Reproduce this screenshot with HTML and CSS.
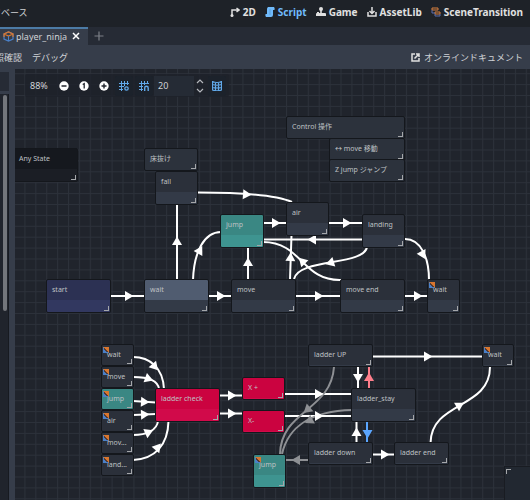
FILE: index.html
```html
<!DOCTYPE html>
<html lang="ja">

<head>
    <meta charset="UTF-8">
    <meta name="viewport" content="width=device-width, initial-scale=1.0">
    <title>player_ninja</title>
    <link rel="stylesheet" href="styles.css">
</head>

<body>

    <header class="topbar">
        <span class="menu-cut">タベース</span>
        <nav class="modes">
            <button><svg width="10" height="10" viewBox="0 0 10 10"><path d="M2 9V3H8M6.500 1L9 3L6.500 5" fill="none" stroke="#e0e0e0" stroke-width="1.500"/><circle cx="2" cy="8.500" r="1.500" fill="#e0e0e0"/></svg>2D</button>
            <button class="active"><svg width="10" height="10" viewBox="0 0 10 10"><path d="M3 0H9Q10 1 9.500 3H8V8Q8 10 6 10H1Q0 9 .5 7H2V2Q2 1 3 0Z" fill="#70bafa"/><path d="M4 3H6M4 5H6M4 7H6" stroke="#4f8fc9" stroke-width=".6"/></svg>Script</button>
            <button><svg width="10" height="10" viewBox="0 0 10 10"><circle cx="5" cy="2" r="2" fill="#e0e0e0"/><path d="M4.200 3H5.800V6H9Q10 6 10 7V9H0V7Q0 6 1 6H1V5H3V6H4.200Z" fill="#e0e0e0"/></svg>Game</button>
            <button><svg width="10" height="10" viewBox="0 0 10 10"><path d="M1 5V9H9V5M5 0V6M2.500 4L5 6.500L7.500 4" fill="none" stroke="#e0e0e0" stroke-width="1.500"/></svg>AssetLib</button>
            <button><svg width="10" height="10" viewBox="0 0 10 10"><path d="M1 1H7V3H1ZM4 5H9V7H4Z" fill="none" stroke="#d9803f"/><path d="M1 3V6H4M4 7V9H9V7" fill="none" stroke="#5a6fae"/></svg>SceneTransition</button>
        </nav>
    </header>

    <div class="tabs">
        <button class="tab"><svg width="11" height="11" viewBox="0 0 11 11"><path d="M1 3L5.500 1L10 3V8L5.500 10L1 8Z" fill="none" stroke="#4a80c8" stroke-width="1.200"/><path d="M1 6V3L5.500 1L10 3V6M1 3L5.500 5L10 3" fill="none" stroke="#d9762e" stroke-width="1.200"/><path d="M5.500 5V10" stroke="#4a80c8"/></svg>player_ninja<svg class="close" width="8" height="8" viewBox="0 0 8 8"><path d="M1 1L7 7M7 1L1 7" stroke="#fff" stroke-width="1.500"/></svg></button>
        <button class="add" aria-label="+"><svg width="10" height="10" viewBox="0 0 10 10"><path d="M5 .5V9.500M.5 5H9.500" stroke="#7c8088" stroke-width="1.200"/></svg></button>
    </div>

    <div class="menubar">
        <button class="menu-item first">照確認</button>
        <button class="menu-item">デバッグ</button>
        <a class="docs" href="#"><svg width="9" height="9" viewBox="0 0 9 9"><path d="M4 1H1V8H8V5M5 1H8V4M8 1L3.500 5.500" fill="none" stroke="#e0e0e0" stroke-width="1.500"/></svg>オンラインドキュメント</a>
    </div>

    <main class="main">
        <aside class="side">
            <div class="side-top"></div>
            <div class="side-list"><div class="scroll"></div></div>
        </aside>

        <div class="graph">
            <svg class="edges" width="100%" height="100%">
                <defs>
                    <pattern id="grid" x="9.400" y="47.800" width="10.900" height="10.900" patternUnits="userSpaceOnUse">
                        <path d="M.5 0V10.900M0 .5H10.900" stroke="#2c313a"/>
                    </pattern>
                    <path id="arrow" d="M-4 -5L4.500 0L-4 5Z"/>
                </defs>
                <rect width="100%" height="100%" fill="url(#grid)"/>
                <g transform="translate(-15 -69)">
                    <!-- transitions -->
                    <g class="line">
                        <path d="M111 296H144M209 296H232M296 296H341M405 296H428"/>
                        <path d="M177 280V204M248 280V247M290 280L291.500 235"/>
                        <path d="M263 223H287M329 223H363M363 239.500H263"/>
                        <path d="M193 280C194 252 204 232 221 232"/>
                        <path d="M198 192.500C236 192.500 276 195 292 202"/>
                        <path d="M341 280C302 281 302 242 263 242"/>
                        <path d="M367 247C364 266 299 258 294 279"/>
                        <path d="M405 239C421 239 429 258 429 280"/>
                        <path d="M133 357C150 357 163 368 164 389M133 377C148 377 158 381 159 389"/>
                        <path d="M133 401L156 402.500M133 415L156 414"/>
                        <path d="M133 435C147 435 157 430 158 421M133 460C155 459 168 445 168.500 421"/>
                        <path d="M220 395.500H243M220 413.500H243M285 394H352M285 416H352"/>
                        <path d="M358 367V389M356.500 443V421"/>
                        <path d="M373 356.500H483M373 454.500H395"/>
                        <path d="M430.500 443C431 401 490 409 490 367"/>
                    </g>
                    <g class="line gray">
                        <path d="M334 367C331 411 281 410 280 454M352 410C311 411 288 427 282 454M308 460H286"/>
                    </g>
                    <path class="line pink" d="M369 388V367"/>
                    <path class="line blue" d="M367 421V443"/>

                    <g fill="#fff">
                        <use href="#arrow" transform="translate(129 296)"/>
                        <use href="#arrow" transform="translate(221 296)"/>
                        <use href="#arrow" transform="translate(319 296)"/>
                        <use href="#arrow" transform="translate(418 296)"/>
                        <use href="#arrow" transform="translate(177 241) rotate(-90)"/>
                        <use href="#arrow" transform="translate(248 262) rotate(-90)"/>
                        <use href="#arrow" transform="translate(290.500 257) rotate(-88)"/>
                        <use href="#arrow" transform="translate(276 223)"/>
                        <use href="#arrow" transform="translate(347 223)"/>
                        <use href="#arrow" transform="translate(312 239.500) rotate(180)"/>
                        <use href="#arrow" transform="translate(200 250) rotate(-60)"/>
                        <use href="#arrow" transform="translate(247 194.500) rotate(4)"/>
                        <use href="#arrow" transform="translate(302 261) rotate(-135)"/>
                        <use href="#arrow" transform="translate(330 263) rotate(163)"/>
                        <use href="#arrow" transform="translate(423 255) rotate(62)"/>
                        <use href="#arrow" transform="translate(155 367) rotate(48)"/>
                        <use href="#arrow" transform="translate(149 379) rotate(20)"/>
                        <use href="#arrow" transform="translate(145 402) rotate(3)"/>
                        <use href="#arrow" transform="translate(145 414.500) rotate(-2)"/>
                        <use href="#arrow" transform="translate(149 432) rotate(-24)"/>
                        <use href="#arrow" transform="translate(158 447) rotate(-50)"/>
                        <use href="#arrow" transform="translate(232 395.500)"/>
                        <use href="#arrow" transform="translate(232 413.500)"/>
                        <use href="#arrow" transform="translate(319 394)"/>
                        <use href="#arrow" transform="translate(319 416)"/>
                        <use href="#arrow" transform="translate(358 378) rotate(90)"/>
                        <use href="#arrow" transform="translate(356.500 432) rotate(-90)"/>
                        <use href="#arrow" transform="translate(428 356.500)"/>
                        <use href="#arrow" transform="translate(385 454.500)"/>
                        <use href="#arrow" transform="translate(460 405) rotate(-30)"/>
                    </g>
                    <g fill="#8e9094">
                        <use href="#arrow" transform="translate(307 410) rotate(139)"/>
                        <use href="#arrow" transform="translate(309 421) rotate(152)"/>
                        <use href="#arrow" transform="translate(296 460) rotate(180)"/>
                    </g>
                    <use href="#arrow" transform="translate(369 377) rotate(-90)" fill="#ff7e8b"/>
                    <use href="#arrow" transform="translate(367.500 434) rotate(90)" fill="#5ba6ff"/>
                </g>
            </svg>

            <div class="node any"><p>Any State</p></div>
            <div class="node note floor"><p>床抜け</p></div>
            <div class="node fall"><p>fall</p></div>
            <div class="node note control"><p>Control 操作</p></div>
            <div class="node note key-move"><p>↔ move 移動</p></div>
            <div class="node note key-jump"><p>Z jump ジャンプ</p></div>
            <div class="node teal jump"><p>jump</p></div>
            <div class="node air"><p>air</p></div>
            <div class="node landing"><p>landing</p></div>
            <div class="node start"><p>start</p></div>
            <div class="node selected wait"><p>wait</p></div>
            <div class="node move"><p>move</p></div>
            <div class="node move-end"><p>move end</p></div>
            <div class="node ref wait-ref"><p>wait</p></div>

            <div class="ref-list">
                <div class="node ref"><p>wait</p></div>
                <div class="node ref"><p>move</p></div>
                <div class="node ref teal"><p>jump</p></div>
                <div class="node ref"><p>air</p></div>
                <div class="node ref"><p>mov...</p></div>
                <div class="node ref"><p>land...</p></div>
            </div>
            <div class="node red ladder-check"><p>ladder check</p></div>
            <div class="node red x-plus"><p>X +</p></div>
            <div class="node red x-minus"><p>X-</p></div>
            <div class="node ref teal jump-ref"><p>jump</p></div>
            <div class="node ladder-up"><p>ladder UP</p></div>
            <div class="node ladder-stay"><p>ladder_stay</p></div>
            <div class="node ladder-down"><p>ladder down</p></div>
            <div class="node ladder-end"><p>ladder end</p></div>
            <div class="node ref wait-end"><p>wait</p></div>

            <div class="minimap"></div>

            <div class="tools">
                <span class="zoom">88%</span>
                <button aria-label="-"><svg width="10" height="10" viewBox="0 0 10 10"><circle cx="5" cy="5" r="4.700" fill="#fff"/><path d="M2.500 5H7.500" stroke="#20242c" stroke-width="1.500"/></svg></button>
                <button aria-label="1"><svg width="10" height="10" viewBox="0 0 10 10"><circle cx="5" cy="5" r="4.700" fill="#fff"/><path d="M3.700 3.500L5.200 2.700V7.500" fill="none" stroke="#20242c" stroke-width="1.300"/></svg></button>
                <button aria-label="+"><svg width="10" height="10" viewBox="0 0 10 10"><circle cx="5" cy="5" r="4.700" fill="#fff"/><path d="M2.500 5H7.500M5 2.500V7.500" stroke="#20242c" stroke-width="1.400"/></svg></button>
                <button class="toggle" aria-label="grid"><svg width="10" height="10" viewBox="0 0 10 10"><path d="M2.500 0V10M5.500 0V5M8.500 0V4M0 2.500H10M0 5.500H5M0 8.500H4" stroke="#62a9ea" stroke-width="1"/><circle cx="7.500" cy="7.500" r="1.700" fill="none" stroke="#62a9ea" stroke-width="1.300"/></svg></button>
                <button class="toggle" aria-label="snap"><svg width="10" height="10" viewBox="0 0 10 10"><path d="M2.500 0V10M5.500 0V4M8.500 0V3M0 2.500H10M0 5.500H4M0 8.500H4" stroke="#62a9ea" stroke-width="1"/><path d="M5.700 10V7A1.700 1.700 0 0 1 9.200 7V10" fill="none" stroke="#62a9ea" stroke-width="1.400"/></svg></button>
                <input class="step" type="text" value="20" aria-label="step">
                <svg class="spin" width="8" height="14" viewBox="0 0 8 14"><path d="M1 4L4 1L7 4M1 10L4 13L7 10" fill="none" stroke="#b5b8bd" stroke-width="1.200"/></svg>
                <button class="toggle" aria-label="minimap"><svg width="10" height="10" viewBox="0 0 10 10"><path d="M.5 .5Q2.500 1.500 5 1.500T9.500 .5V9Q7.500 9.800 5 9.800T.5 9ZM3.500 1V9.500M6.500 1V9.500M.5 3.500Q5 5 9.500 3.500M.5 6.500Q5 7.500 9.500 6.500" fill="none" stroke="#62a9ea" stroke-width="1.200"/></svg></button>
            </div>
        </div>
    </main>

</body>

</html>
```
FILE: styles.css
```css
*,
*::before,
*::after {
    box-sizing: border-box;
}

body {
    margin: 0;
    height: 100vh;
    display: flex;
    flex-direction: column;
    overflow: hidden;
    background-color: #363d4a;
    color: #d0d2d6;
    font-family: "Noto Sans", "Noto Sans CJK JP", sans-serif;
    font-size: 9px;
}

button {
    display: flex;
    align-items: center;
    padding: 0;
    border: 0;
    background: none;
    color: inherit;
    font: inherit;
}

svg {
    flex: none;
}

.topbar {
    display: flex;
    align-items: center;
    justify-content: space-between;
    height: 27px;
    padding: 0 7px 3px 0;
    background-color: #1e2228;
    white-space: nowrap;
}

.menu-cut {
    margin-left: -8px;
}

.modes {
    display: flex;
    gap: 9px;
    font-size: 10px;
    font-weight: bold;
    color: #e0e0e0;
}

.modes button {
    gap: 3px;
}

.modes .active {
    color: #70bafa;
}

/* scene tabs */
.tabs {
    display: flex;
    height: 18px;
    background-color: #262b35;
}

.tab {
    width: 88px;
    padding: 0 0 2px 3px;
    gap: 2px;
    border-top: 2px solid #4c7ba6;
    background-color: #363d4a;
}

.close {
    margin-left: 3px;
}

.add {
    margin-left: 6px;
}

.menubar {
    display: flex;
    align-items: center;
    height: 24px;
    padding-right: 7px;
    gap: 10px;
    white-space: nowrap;
}

.first {
    margin-left: -5px;
}

.docs {
    display: flex;
    align-items: center;
    gap: 4px;
    margin-left: auto;
    color: inherit;
    text-decoration: none;
}

.main {
    display: flex;
    flex: 1;
    min-height: 0;
}

.side {
    display: flex;
    flex-direction: column;
    gap: 3px;
    width: 15px;
    padding: 3px 6px 0 0;
}

.side-top {
    height: 19px;
    background-color: #262b35;
}

.side-list {
    flex: 1;
    background-color: #20242c;
    border-right: 1px solid #171a20;
}

.scroll {
    width: 4px;
    height: 216px;
    margin: 1px 0 0 3px;
    border-radius: 2px;
    background-color: #73767b;
}

/* graph */
.graph {
    position: relative;
    flex: 1;
    overflow: hidden;
    background-color: #20242c;
}

.edges {
    position: absolute;
    top: 0;
    left: 0;
}

.line {
    fill: none;
    stroke: #fff;
    stroke-width: 2;
}

.gray {
    stroke: #8e9094;
}

.pink {
    stroke: #ff7e8b;
}

.blue {
    stroke: #5ba6ff;
}

.tools {
    position: absolute;
    top: 5px;
    left: 10px;
    display: flex;
    align-items: center;
    height: 23px;
    padding: 0 2px 0 5px;
    border-radius: 2px;
    background-color: rgba(30, 34, 42, 0.8);
}

.zoom {
    width: 24px;
}

.tools button {
    width: 20px;
    height: 20px;
    justify-content: center;
}

.tools .toggle {
    width: 18px;
    margin: 0 1px;
    border-radius: 2px;
    background-color: #1c222b;
}

.step {
    width: 40px;
    height: 20px;
    padding: 0 4px;
    border: 0;
    background-color: #252b35;
    color: #d0d2d6;
    font: inherit;
}

.spin {
    margin: 0 3px 0 2px;
}

.node {
    position: absolute;
    width: 65px;
    height: 34px;
    overflow: hidden;
    border: 1px solid #14171c;
    border-radius: 2px;
    background: #333a47 linear-gradient(#2b303a, #2b303a) no-repeat 0 0 / 100% 20px;
    color: #bfc1c4;
    font-size: 7px;
}

.node p {
    margin: 0;
    padding-left: 5px;
    line-height: 19px;
    white-space: nowrap;
}

.node::after {
    content: "";
    position: absolute;
    right: 1px;
    bottom: 1px;
    width: 5px;
    height: 5px;
    border-right: 1px solid #a5a7aa;
    border-bottom: 1px solid #a5a7aa;
}

.ref::before {
    content: "";
    position: absolute;
    top: 2px;
    left: 1px;
    width: 6px;
    height: 6px;
    border: 1px solid #d9762e;
    border-left-color: #4a80c8;
    border-bottom-color: #4a80c8;
    background: linear-gradient(45deg, #4a80c8 35%, #553c35 35%, #553c35 55%, #d9762e 55%);
}

.note {
    background: #2c323c;
}

.teal {
    background: #3e9490 linear-gradient(#3a8783, #3a8783) no-repeat 0 0 / 100% 20px;
}

.red {
    background: #d10a4a linear-gradient(#cb0340, #cb0340) no-repeat 0 0 / 100% 20px;
}

.any {
    top: 79px;
    left: -2px;
    width: 65px;
    background: #1b1e25 linear-gradient(#15181e, #15181e) no-repeat 0 0 / 100% 20px;
}

.floor {
    top: 79px;
    left: 129px;
    width: 54px;
    height: 23px;
}

.fall {
    top: 102px;
    left: 140px;
    width: 43px;
}

.control {
    top: 47px;
    left: 271px;
    width: 119px;
    height: 23px;
}

.key-move {
    top: 69px;
    left: 314px;
    width: 76px;
    height: 23px;
}

.key-jump {
    top: 90px;
    left: 314px;
    width: 76px;
    height: 23px;
}

.jump {
    top: 145px;
    left: 205px;
    width: 44px;
}

.air {
    top: 133px;
    left: 271px;
    width: 43px;
}

.landing {
    top: 145px;
    left: 347px;
    width: 43px;
}

.start {
    top: 210px;
    left: 31px;
    background: #323860 linear-gradient(#2c3153, #2c3153) no-repeat 0 0 / 100% 20px;
}

.wait {
    top: 210px;
    left: 129px;
}

.selected {
    background: #333a47 linear-gradient(#505c70, #505c70) no-repeat 0 0 / 100% 20px;
}

.move {
    top: 210px;
    left: 216px;
}

.move-end {
    top: 210px;
    left: 325px;
}

.wait-ref {
    top: 210px;
    left: 412px;
    width: 33px;
}

/* ladder */
.ref-list {
    position: absolute;
    top: 275px;
    left: 86px;
    display: flex;
    flex-direction: column;
}

.ref-list .node {
    position: relative;
    width: 33px;
    height: 22px;
}

.ladder-check {
    top: 319px;
    left: 140px;
}

.x-plus {
    top: 308px;
    left: 227px;
    width: 43px;
    height: 23px;
}

.x-minus {
    top: 341px;
    left: 227px;
    width: 43px;
    height: 23px;
}

.jump-ref {
    top: 385px;
    left: 238px;
    width: 33px;
}

.ladder-up {
    top: 275px;
    left: 293px;
    height: 23px;
}

.ladder-stay {
    top: 319px;
    left: 336px;
}

.ladder-down {
    top: 373px;
    left: 293px;
    height: 23px;
}

.ladder-end {
    top: 373px;
    left: 379px;
    width: 55px;
    height: 23px;
}

.wait-end {
    top: 275px;
    left: 467px;
    width: 32px;
    height: 23px;
}

.minimap {
    position: absolute;
    right: 0;
    bottom: 0;
    width: 26px;
    height: 34px;
    border: 1px solid #191c22;
    border-width: 1px 0 0 1px;
    background-color: #222831;
}

.minimap::before {
    content: "";
    position: absolute;
    top: 2px;
    left: 1px;
    width: 5px;
    height: 5px;
    border-top: 1px solid #a5a7aa;
    border-left: 1px solid #a5a7aa;
}
```
